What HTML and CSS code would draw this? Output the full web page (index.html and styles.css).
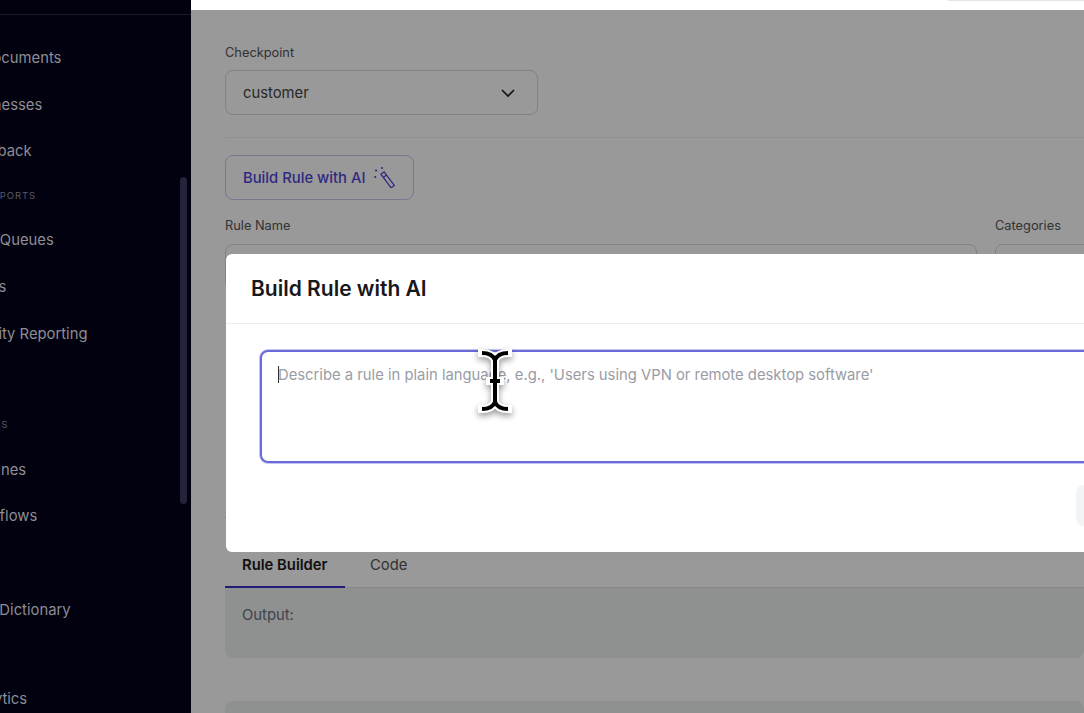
FILE: index.html
```html
<!DOCTYPE html>
<html lang="en">
  <head>
    <meta charset="UTF-8" />
    <meta name="viewport" content="width=device-width, initial-scale=1.0" />
    <title>Build Rule with AI</title>
    <link rel="stylesheet" href="styles.css">
  </head>
  <body>
    <aside class="sidebar">
      <div class="sidebar-top"></div>
      <nav class="nav">
        <a class="nav-item">ID Documents</a>
        <a class="nav-item">Businesses</a>
        <a class="nav-item">Feedback</a>
        <div class="nav-label">REPORTS</div>
        <a class="nav-item">Task Queues</a>
        <a class="nav-item">Cases</a>
        <a class="nav-item">Activity Reporting</a>
        <a class="nav-item">Logs</a>
        <div class="nav-label">OPS</div>
        <a class="nav-item">Pipelines</a>
        <a class="nav-item">Workflows</a>
        <a class="nav-item">Lists</a>
        <a class="nav-item">Data Dictionary</a>
        <div class="nav-label">AI</div>
        <a class="nav-item">Analytics</a>
      </nav>
      <div class="scroll-thumb"></div>
    </aside>
    <div class="main">
      <header class="topbar"><div class="topbar-pill"></div></header>
      <div class="content">
        <label class="field-label">Checkpoint</label>
        <div class="select">
          <span>customer</span>
          <svg class="chevron" viewBox="0 0 16 10" aria-hidden="true"><path d="M2 2l6 6 6-6" /></svg>
        </div>
        <hr class="divider" />
        <button class="ai-btn" type="button">
          <span>Build Rule with AI</span>
          <svg class="wand" viewBox="0 0 21 21" aria-hidden="true">
            <path d="M6.9 7.2l3.2-2.4 10.2 13.6-3.2 2.4z" />
            <path d="M9.3 10.4l3.2-2.4" />
            <path class="spark" d="M2 3.5h.1M8 1h.1M1.2 10h.1" />
          </svg>
        </button>
        <div class="rule-row">
          <div class="rule-col">
            <label class="field-label">Rule Name</label>
            <div class="input"></div>
          </div>
          <div class="cat-col">
            <label class="field-label">Categories</label>
            <div class="input"></div>
          </div>
        </div>
        <hr class="divider low" />
        <div class="tabs">
          <div class="tab active">Rule Builder</div>
          <div class="tab">Code</div>
        </div>
        <div class="output">Output:</div>
        <div class="next-panel"></div>

        <div class="overlay"></div>
        <div class="modal">
          <div class="modal-head">Build Rule with AI</div>
          <div class="modal-body">
            <div class="prompt-wrap">
              <textarea class="prompt" placeholder="Describe a rule in plain language, e.g., 'Users using VPN or remote desktop software'"></textarea>
              <span class="caret"></span>
            </div>
            <div class="modal-foot"><button class="gen-btn" type="button">Generate</button></div>
          </div>
        </div>
      </div>
    </div>
    <svg class="cursor" viewBox="0 0 36 68" aria-hidden="true">
      <path class="cursor-edge" d="M5 6c7 0 11 2 13 7 2-5 6-7 13-7M18 13v42M5 62c7 0 11-2 13-7 2 5 6 7 13 7M13 34h10" />
      <path class="cursor-line" d="M5 6c7 0 11 2 13 7 2-5 6-7 13-7M18 13v42M5 62c7 0 11-2 13-7 2 5 6 7 13 7M13 34h10" />
    </svg>
  </body>
</html>
```

FILE: styles.css
```css
* {
  box-sizing: border-box;
}
body {
  font-family: 'Inter', sans-serif;
  display: flex;
  height: 100vh;
  margin: 0;
  overflow: hidden;
  background: #fff;
}
.sidebar {
  position: relative;
  flex: 0 0 191px;
  background: #01010f;
  overflow: hidden;
}
.sidebar-top {
  height: 15px;
  border-bottom: 1px solid #1a1a2b;
}
.nav {
  margin-left: -37px;
  padding-top: 20px;
  white-space: nowrap;
}
.nav-item {
  display: block;
  height: 46.67px;
  line-height: 46.67px;
  font-size: 14.8px;
  color: #8e8e96;
}
.nav-label {
  height: 42.5px;
  line-height: 42.5px;
  margin-left: 23px;
  font-size: 9.5px;
  letter-spacing: 0.1em;
  color: #5c5c68;
}
.scroll-thumb {
  position: absolute;
  top: 177px;
  left: 180px;
  width: 7px;
  height: 327px;
  border-radius: 4px;
  background: #23243a;
}
.main {
  flex: 1;
  min-width: 0;
  display: flex;
  flex-direction: column;
}
.topbar {
  flex: 0 0 10px;
  display: flex;
  justify-content: flex-end;
  background: #fff;
}
.topbar-pill {
  width: 136px;
  height: 1px;
  background: #e2e6e8;
}
.content {
  position: relative;
  flex: 1;
  padding: 34px 0 0 34px;
  background: #fff;
  overflow: hidden;
}
.field-label {
  display: block;
  height: 18px;
  line-height: 18px;
  font-size: 12.8px;
  color: #555;
}
.select {
  display: flex;
  align-items: center;
  justify-content: space-between;
  width: 313px;
  height: 45px;
  margin-top: 8px;
  padding: 1px 21px 0 17px;
  border: 1px solid #d5d7db;
  border-radius: 8px;
  font-size: 14.8px;
  color: #444;
}
.chevron {
  width: 16px;
  height: 10px;
  fill: none;
  stroke: #222;
  stroke-width: 1.7;
}
.divider {
  height: 1px;
  margin: 22px 0 17px;
  border: 0;
  background: #f0f1f2;
}
.ai-btn {
  display: flex;
  align-items: center;
  gap: 9px;
  width: 189px;
  height: 45px;
  padding: 0 17px;
  border: 1px solid #c7c9ec;
  border-radius: 8px;
  background: #fff;
  font: inherit;
  font-size: 14.8px;
  font-weight: 500;
  white-space: nowrap;
  color: #4f46d8;
}
.wand {
  flex: none;
  width: 21px;
  height: 21px;
  fill: none;
  stroke: #4f46d8;
  stroke-width: 1.3;
}
.spark {
  stroke-width: 2;
  stroke-linecap: round;
}
.rule-row {
  display: flex;
  gap: 18px;
  margin-top: 17px;
}
.rule-col {
  flex: 0 0 752px;
}
.cat-col {
  flex: 0 0 200px;
}
.input {
  height: 45px;
  margin-top: 9px;
  border: 1px solid #d5d7db;
  border-radius: 8px;
}
.divider.low {
  margin: 228px 0 0;
  background: #c9cbce;
}
.tabs {
  display: flex;
  height: 70px;
  padding-top: 29px;
  border-bottom: 1px solid #dfe1e3;
}
.tab {
  height: 41px;
  line-height: 37px;
  padding: 0 17px;
  font-size: 14.8px;
  white-space: nowrap;
  color: #555;
}
.tab.active {
  width: 120px;
  margin-right: 8px;
  border-bottom: 2px solid #3730c8;
  font-weight: 600;
  color: #1c1c1c;
}
.output {
  height: 70px;
  padding: 18px 17px;
  border-radius: 0 0 8px 8px;
  background: #eef0f1;
  font-size: 14.8px;
  color: #6b7280;
}
.next-panel {
  height: 60px;
  margin-top: 43px;
  border-radius: 8px;
  background: #eef0f1;
}
.overlay {
  position: absolute;
  top: 0;
  left: 0;
  width: 100%;
  height: 100%;
  background: rgba(0, 0, 0, 0.4);
}
.modal {
  position: absolute;
  top: 244px;
  left: 35px;
  width: 1000px;
  height: 298px;
  border-radius: 6px;
  background: #fff;
}
.modal-head {
  height: 70px;
  line-height: 69px;
  padding-left: 25px;
  border-bottom: 1px solid #ececee;
  font-size: 21px;
  font-weight: 600;
  color: #18181b;
}
.modal-body {
  padding: 26px 34px 0;
}
.prompt-wrap {
  position: relative;
}
.prompt {
  display: block;
  width: 100%;
  height: 113px;
  padding: 12px 16px;
  border: 2px solid #6a6ad8;
  border-radius: 8px;
  outline: 0;
  box-shadow: 0 0 0 1px #c5c5f1;
  resize: none;
  font-family: inherit;
  font-size: 14.8px;
  line-height: 22px;
  color: #222;
}
.prompt::placeholder {
  color: #9a9ca5;
}
.caret {
  position: absolute;
  top: 16px;
  left: 18px;
  width: 1px;
  height: 17px;
  background: #333;
}
.modal-foot {
  display: flex;
  justify-content: flex-end;
  margin-top: 22px;
}
.gen-btn {
  width: 116px;
  height: 41px;
  border: 0;
  border-radius: 8px;
  background: #f3f4f6;
  font: inherit;
  font-size: 14.8px;
  color: #9a9ca5;
}
/* mouse pointer lies over the modal */
.cursor {
  position: absolute;
  top: 347px;
  left: 477px;
  width: 36px;
  height: 68px;
  fill: none;
  overflow: visible;
  filter: drop-shadow(0 3px 3px rgba(0, 0, 0, 0.4));
}
.cursor-edge {
  stroke: #fff;
  stroke-width: 8;
  stroke-linecap: square;
}
.cursor-line {
  stroke: #000;
  stroke-width: 4;
}
```
